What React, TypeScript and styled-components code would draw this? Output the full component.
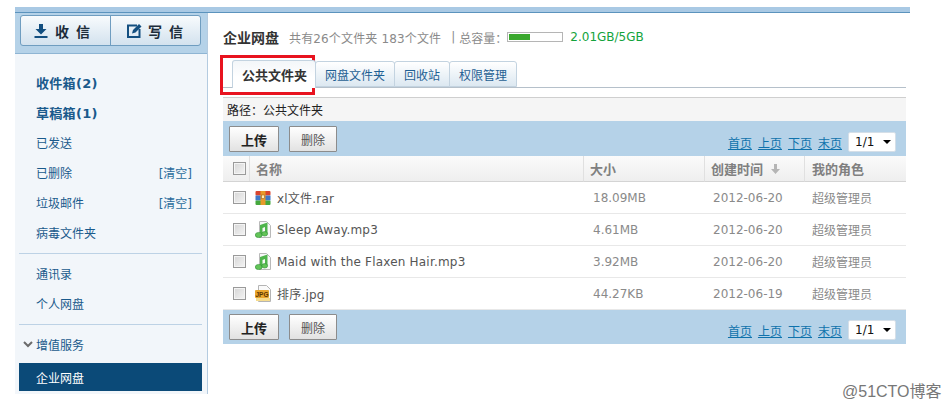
import React from "react";
import styled, { createGlobalStyle } from "styled-components";

const FONT = `"DejaVu Sans", "Noto Sans CJK SC", sans-serif`;

const GlobalStyle = createGlobalStyle`
  html, body {
    margin: 0;
    padding: 0;
    background: #fff;
  }
  body {
    font-family: ${FONT};
    font-size: 12px;
  }
`;

const Page = styled.div`
  position: relative;
  width: 950px;
  height: 407px;
  overflow: hidden;
  padding: 7px 0 0 15px;
  box-sizing: border-box;
`;

const Frame = styled.div`
  width: 895px;
  height: 387px;
  border-top: 5px solid #a9c9e4;
  box-sizing: border-box;
  display: flex;
  flex-direction: column;
`;

const Rule = styled.div`
  height: 1px;
  background: #5b93bd;
  flex: none;
`;

const Columns = styled.div`
  flex: 1;
  display: flex;
  min-height: 0;
`;

const Sidebar = styled.aside`
  width: 192px;
  flex: none;
  background: #f2f6fa;
  border-right: 1px solid #b4cbe0;
  box-sizing: content-box;
`;

const SendBar = styled.div`
  height: 41px;
  background: #b5d2e8;
  border-bottom: 1px solid #8fb5d3;
  padding: 2px 0 0 5px;
  box-sizing: border-box;
`;

const SendGroup = styled.div`
  display: flex;
  width: 181px;
  height: 31px;
  border: 1px solid #6f9dc0;
  border-radius: 3px;
  box-sizing: border-box;
  background: linear-gradient(#f8fbfd, #d3e2ee);
`;

const SendButton = styled.div<{ $first?: boolean }>`
  width: ${(p) => (p.$first ? "90px" : "89px")};
  display: flex;
  align-items: center;
  justify-content: ${(p) => (p.$first ? "center" : "flex-start")};
  gap: ${(p) => (p.$first ? "7px" : "6px")};
  padding-left: ${(p) => (p.$first ? "0" : "16px")};
  box-sizing: border-box;
  border-right: ${(p) => (p.$first ? "1px solid #6f9dc0" : "none")};
  color: #1c2c3a;
  font-size: 14px;
  font-weight: 700;
  letter-spacing: 7px;
`;

const Menu = styled.div`
  padding: 13px 0 0 4px;
`;

const MenuGroup = styled.div<{ $ruled?: boolean }>`
  width: 183px;
  padding-bottom: ${(p) => (p.$ruled ? "6px" : "0")};
  margin-bottom: ${(p) => (p.$ruled ? "4px" : "0")};
  border-bottom: ${(p) => (p.$ruled ? "1px solid #bdd2e5" : "none")};
`;

const MenuRow = styled.div<{ $bold?: boolean }>`
  height: 30px;
  display: flex;
  align-items: center;
  justify-content: space-between;
  padding: 0 10px 0 17px;
  color: #1a5a8c;
  font-size: ${(p) => (p.$bold ? "13px" : "12px")};
  font-weight: ${(p) => (p.$bold ? 700 : 400)};
`;

const BoldCount = styled.span`
  letter-spacing: 0.3px;
`;

const ClearLink = styled.span`
  color: #2a6b9c;
`;

const ServiceRow = styled.div`
  height: 30px;
  display: flex;
  align-items: center;
  gap: 3px;
  padding-left: 4px;
  color: #1a5a8c;
`;

const ActiveRow = styled.div`
  height: 28px;
  margin-top: 4px;
  display: flex;
  align-items: center;
  padding-left: 17px;
  background: #0b4a78;
  color: #fff;
`;

const Main = styled.main`
  flex: 1;
  padding: 14px 4px 0 15px;
  min-width: 0;
`;

const TitleRow = styled.div`
  height: 20px;
  display: flex;
  align-items: center;
  color: #8a8a8a;
  white-space: nowrap;
`;

const Title = styled.h1`
  margin: 0 10px 0 0;
  font-size: 14px;
  font-weight: 700;
  color: #333;
`;

const Counts = styled.span`
  letter-spacing: 0.15px;
`;

const Quota = styled.span`
  margin-left: 10px;
`;

const QuotaLabel = styled.span`
  margin-left: 4px;
`;

const Meter = styled.div`
  width: 52px;
  height: 6px;
  padding: 1px;
  margin: 0 7px 0 0;
  border: 1px solid #b5b5b5;
  background: #fff;
  box-sizing: content-box;
`;

const MeterFill = styled.div`
  height: 100%;
  background: #3aa82e;
`;

const QuotaText = styled.span`
  color: #13a33c;
`;

const Tabs = styled.div`
  margin-top: 13px;
  height: 27px;
  display: flex;
  align-items: flex-end;
  padding-left: 9px;
  border-bottom: 1px solid #b5c0ca;
  box-sizing: content-box;
`;

const Tab = styled.div<{ $active?: boolean }>`
  height: ${(p) => (p.$active ? "28px" : "26px")};
  margin-bottom: ${(p) => (p.$active ? "-1px" : "0")};
  padding: ${(p) => (p.$active ? "0 8px 0 9px" : "0 9px")};
  box-sizing: border-box;
  display: flex;
  align-items: center;
  border: 1px solid #c3d3e0;
  border-bottom: ${(p) => (p.$active ? "none" : "1px solid #c3d3e0")};
  border-radius: 3px 3px 0 0;
  margin-right: -1px;
  background: ${(p) => (p.$active ? "linear-gradient(#f3f6f9, #fff 60%)" : "linear-gradient(#fff, #dce8f1)")};
  color: ${(p) => (p.$active ? "#333" : "#1f6093")};
  font-size: ${(p) => (p.$active ? "13px" : "12px")};
  font-weight: ${(p) => (p.$active ? 700 : 400)};
  z-index: ${(p) => (p.$active ? 1 : 0)};
`;

const PathBar = styled.div`
  margin-top: 9px;
  height: 24px;
  border-top: 1px solid #cfcfcf;
  background: #f5f5f5;
  box-sizing: border-box;
  padding-left: 4px;
  display: flex;
  align-items: center;
  color: #222;
`;

const Toolbar = styled.div`
  height: 35px;
  background: #b5d2e8;
  display: flex;
  padding: 5px 10px 0 6px;
  box-sizing: border-box;
`;

const ActionButton = styled.button<{ $bold?: boolean }>`
  width: ${(p) => (p.$bold ? "50px" : "48px")};
  height: 26px;
  margin-right: ${(p) => (p.$bold ? "10px" : "0")};
  padding: 0;
  border: 1px solid #8c8c8c;
  border-radius: 1px;
  background: linear-gradient(#fff, #e2e2e2);
  font-family: ${FONT};
  font-size: ${(p) => (p.$bold ? "13px" : "12px")};
  font-weight: ${(p) => (p.$bold ? 700 : 400)};
  color: ${(p) => (p.$bold ? "#222" : "#555")};
`;

const Pager = styled.div`
  margin-left: auto;
  display: flex;
  align-items: flex-start;
  gap: 6px;
`;

const PageLink = styled.a`
  margin-top: 9px;
  color: #0f72ac;
  text-decoration: underline;
  line-height: 18px;
`;

const PageSelect = styled.div`
  width: 48px;
  height: 20px;
  margin-top: 6px;
  background: #fff;
  border: 1px solid #d5dfe8;
  border-radius: 2px;
  box-sizing: border-box;
  display: flex;
  align-items: center;
  justify-content: space-between;
  padding: 0 4px 0 6px;
  color: #111;
`;

const Caret = styled.span`
  width: 0;
  height: 0;
  border-left: 4px solid transparent;
  border-right: 4px solid transparent;
  border-top: 4px solid #000;
`;

const Grid = styled.div`
  display: grid;
  grid-template-columns: 361px 121px 100px 101px;
  margin-bottom: -1px;
`;

const HeadRow = styled.div`
  display: contents;
`;

const HeadCell = styled.div<{ $plain?: boolean; $pad?: number }>`
  height: 26px;
  box-sizing: border-box;
  display: flex;
  align-items: center;
  gap: 8px;
  padding-left: ${(p) => p.$pad ?? 6}px;
  background: linear-gradient(#fbfbfb, #eeeeee);
  border-bottom: 1px solid #d4d4d4;
  border-right: ${(p) => (p.$plain ? "none" : "1px solid #e0e0e0")};
  color: #808080;
  font-size: 13px;
  font-weight: 700;
`;

const NameHead = styled(HeadCell)`
  padding-left: 10px;
  gap: 3px;
`;

const Divider = styled.span`
  width: 1px;
  height: 25px;
  background: #e0e0e0;
  margin-right: 3px;
`;

const Cell = styled.div<{ $pad?: number }>`
  height: 32px;
  box-sizing: border-box;
  display: flex;
  align-items: center;
  padding-left: ${(p) => p.$pad ?? 6}px;
  border-bottom: 1px solid #e8e8e8;
  color: #8a8a8a;
`;

const NameCell = styled(Cell)`
  padding-left: 10px;
  color: #555;
  gap: 9px;
`;

const Check = styled.span`
  width: 13px;
  height: 13px;
  flex: none;
  box-sizing: border-box;
  border: 1px solid #9a9a9a;
  background: linear-gradient(135deg, #d6d6d6, #f4f4f4);
  box-shadow: inset 0 0 0 1px #f4f4f4;
`;

const FileName = styled.span`
  margin-left: -3px;
  letter-spacing: 0.2px;
  white-space: nowrap;
`;

const RedFrame = styled.div`
  position: absolute;
  left: 220px;
  top: 55px;
  width: 95px;
  height: 40px;
  box-sizing: border-box;
  border: 3px solid #e8131f;
  pointer-events: none;
`;

const Watermark = styled.div`
  position: absolute;
  left: 842px;
  top: 378px;
  font-family: "Liberation Sans", "Noto Sans CJK SC", sans-serif;
  font-size: 16px;
  color: #777;
  white-space: nowrap;
`;

const InboxIcon = () => (
  <svg width="14" height="14" viewBox="0 0 14 14">
    <path d="M5 0h4v5h3.500L7 10.500 1.500 5H5z M0.500 12h13v2h-13z" fill="#134f80" />
  </svg>
);

const ComposeIcon = () => (
  <svg width="15" height="15" viewBox="0 0 15 15">
    <path d="M1 2.500h9M1 1.500v12.500h11.500V6" fill="none" stroke="#134f80" strokeWidth="2" />
    <path d="M5 10.500l1-3.500 6-6 2.500 2.500-6 6z" fill="#134f80" />
  </svg>
);

const Chevron = () => (
  <svg width="10" height="7" viewBox="0 0 10 7">
    <path d="M1 1l4 4 4-4" fill="none" stroke="#6b6b6b" strokeWidth="2" />
  </svg>
);

const SortArrow = () => (
  <svg width="9" height="10" viewBox="0 0 9 10">
    <path d="M3 0h3v5h3L4.500 10 0 5h3z" fill="#b5b5b5" />
  </svg>
);

const RarIcon = () => (
  <svg width="16" height="16" viewBox="0 0 16 16">
    <rect x="0.500" y="1" width="15" height="4.500" rx="1" fill="#d8452f" />
    <rect x="0.500" y="5.500" width="15" height="5" fill="#3f78c8" />
    <rect x="0.500" y="10.500" width="15" height="4.500" rx="1" fill="#45a83d" />
    <rect x="5.500" y="1" width="5" height="14" fill="#e79a2a" />
    <rect x="6.500" y="5" width="3" height="3.500" fill="#fff0b8" stroke="#a8641a" strokeWidth="0.600" />
  </svg>
);

const MusicIcon = () => (
  <svg width="16" height="17" viewBox="0 0 16 17">
    <path d="M4.500 .500h7l4 4v12h-11z" fill="#f8f8f8" stroke="#b9b9b9" />
    <path d="M5 4l7.500-2.500V12.500H10V6L7.500 7v7.500H5z" fill="#4fb54c" />
    <ellipse cx="3.700" cy="14" rx="3.400" ry="2.600" fill="#63c458" stroke="#2f8f36" strokeWidth="0.600" />
    <ellipse cx="9.700" cy="12.800" rx="2.900" ry="2.200" fill="#63c458" stroke="#2f8f36" strokeWidth="0.600" />
  </svg>
);

const JpgIcon = () => (
  <svg width="16" height="17" viewBox="0 0 16 17">
    <path d="M3.500 .500h8l4 4v12h-12z" fill="#fafafa" stroke="#b4b4b4" />
    <rect x="0" y="5" width="14" height="8" rx="1" fill="#e8a62e" />
    <rect x="1" y="13" width="14" height="3" fill="#f6dc8e" />
    <text x="7" y="11.500" textAnchor="middle" fontSize="6.500" fontWeight="700" fill="#5a3300" fontFamily="Liberation Sans">
      JPG
    </text>
  </svg>
);

type FileRow = {
  name: string;
  size: string;
  date: string;
  kind: "rar" | "music" | "jpg";
};

const files: FileRow[] = [
  { name: "xl文件.rar", size: "18.09MB", date: "2012-06-20", kind: "rar" },
  { name: "Sleep Away.mp3", size: "4.61MB", date: "2012-06-20", kind: "music" },
  { name: "Maid with the Flaxen Hair.mp3", size: "3.92MB", date: "2012-06-20", kind: "music" },
  { name: "排序.jpg", size: "44.27KB", date: "2012-06-19", kind: "jpg" },
];

const icons = { rar: RarIcon, music: MusicIcon, jpg: JpgIcon };

const ToolbarRow = () => (
  <Toolbar>
    <ActionButton $bold>上传</ActionButton>
    <ActionButton>删除</ActionButton>
    <Pager>
      <PageLink>首页</PageLink>
      <PageLink>上页</PageLink>
      <PageLink>下页</PageLink>
      <PageLink>末页</PageLink>
      <PageSelect>
        1/1
        <Caret />
      </PageSelect>
    </Pager>
  </Toolbar>
);

const App = () => {
  return (
    <Page>
      <GlobalStyle />
      <Frame>
        <Rule />
        <Columns>
          <Sidebar>
            <SendBar>
              <SendGroup>
                <SendButton $first>
                  <InboxIcon />
                  <span>收信</span>
                </SendButton>
                <SendButton>
                  <ComposeIcon />
                  <span>写信</span>
                </SendButton>
              </SendGroup>
            </SendBar>
            <Menu>
              <MenuGroup $ruled>
                <MenuRow $bold>
                  <BoldCount>收件箱(2)</BoldCount>
                </MenuRow>
                <MenuRow $bold>
                  <BoldCount>草稿箱(1)</BoldCount>
                </MenuRow>
                <MenuRow>已发送</MenuRow>
                <MenuRow>
                  已删除<ClearLink>[清空]</ClearLink>
                </MenuRow>
                <MenuRow>
                  垃圾邮件<ClearLink>[清空]</ClearLink>
                </MenuRow>
                <MenuRow>病毒文件夹</MenuRow>
              </MenuGroup>
              <MenuGroup $ruled>
                <MenuRow>通讯录</MenuRow>
                <MenuRow>个人网盘</MenuRow>
              </MenuGroup>
              <MenuGroup>
                <ServiceRow>
                  <Chevron />
                  增值服务
                </ServiceRow>
                <ActiveRow>企业网盘</ActiveRow>
              </MenuGroup>
            </Menu>
          </Sidebar>
          <Main>
            <TitleRow>
              <Title>企业网盘</Title>
              <Counts>共有26个文件夹 183个文件</Counts>
              <Quota>|</Quota>
              <QuotaLabel>总容量：</QuotaLabel>
              <Meter>
                <MeterFill style={{ width: `${(2.01 / 5) * 100}%` }} />
              </Meter>
              <QuotaText>2.01GB/5GB</QuotaText>
            </TitleRow>
            <Tabs>
              <Tab $active>公共文件夹</Tab>
              <Tab>网盘文件夹</Tab>
              <Tab>回收站</Tab>
              <Tab>权限管理</Tab>
            </Tabs>
            <PathBar>路径：公共文件夹</PathBar>
            <ToolbarRow />
            <Grid>
              <HeadRow>
                <NameHead>
                  <Check />
                  <Divider />
                  名称
                </NameHead>
                <HeadCell>大小</HeadCell>
                <HeadCell>
                  创建时间
                  <SortArrow />
                </HeadCell>
                <HeadCell $plain $pad={7}>
                  我的角色
                </HeadCell>
              </HeadRow>
              {files.map((file) => {
                const Icon = icons[file.kind];
                return (
                  <React.Fragment key={file.name}>
                    <NameCell>
                      <Check />
                      <Icon />
                      <FileName>{file.name}</FileName>
                    </NameCell>
                    <Cell $pad={9}>{file.size}</Cell>
                    <Cell $pad={8}>{file.date}</Cell>
                    <Cell $pad={7}>超级管理员</Cell>
                  </React.Fragment>
                );
              })}
            </Grid>
            <ToolbarRow />
          </Main>
        </Columns>
      </Frame>
      <RedFrame />
      <Watermark>@51CTO博客</Watermark>
    </Page>
  );
};

export default App;
